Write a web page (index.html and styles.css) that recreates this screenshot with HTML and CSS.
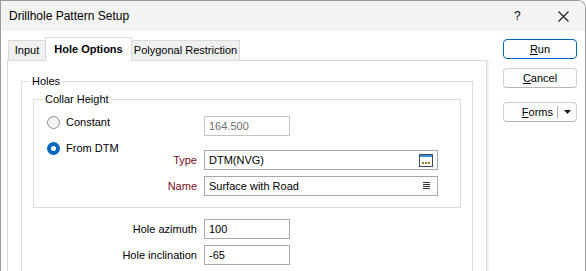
FILE: index.html
```html
<!DOCTYPE html>
<html lang="en">

<head>
    <meta charset="UTF-8">
    <title>Drillhole Pattern Setup</title>
    <link rel="stylesheet" href="styles.css">
</head>

<body>
    <div class="window">
        <div class="titlebar">
            <span class="title">Drillhole Pattern Setup</span>
            <span class="help">?</span>
            <span class="close">
                <svg width="11" height="11" viewBox="0 0 11 11">
                    <path d="M0.5 0.5 L10.5 10.5 M10.5 0.5 L0.5 10.5" stroke="#1a1a1a" stroke-width="1.1" fill="none" />
                </svg>
            </span>
        </div>

        <div class="content">
            <div class="tabs-area">
                <div class="tabs">
                    <div class="tab tab-input">Input</div>
                    <div class="tab tab-hole active">Hole Options</div>
                    <div class="tab tab-poly">Polygonal Restriction</div>
                </div>

                <div class="panel">
                    <fieldset class="group holes">
                        <legend>Holes</legend>

                        <fieldset class="group collar">
                            <legend>Collar Height</legend>
                            <div class="collar-grid">
                                <div class="cell row1">
                                    <label class="radio">
                                        <span class="dot"></span>Constant
                                    </label>
                                </div>
                                <div class="field disabled short">164.500</div>

                                <div class="cell row2">
                                    <label class="radio">
                                        <span class="dot checked"></span>From DTM
                                    </label>
                                    <span class="label red">Type</span>
                                </div>
                                <div class="field">
                                    <span>DTM(NVG)</span>
                                    <svg class="browse" width="14" height="13" viewBox="0 0 14 13">
                                        <rect x="0.5" y="0.5" width="13" height="12" fill="#fff" stroke="#3d4b5c" />
                                        <rect x="1" y="1" width="12" height="2" fill="#3a8ee6" />
                                        <rect x="3" y="8" width="2" height="2" fill="#a8782c" />
                                        <rect x="6" y="8" width="2" height="2" fill="#a8782c" />
                                        <rect x="9" y="8" width="2" height="2" fill="#a8782c" />
                                    </svg>
                                </div>

                                <div class="cell row3">
                                    <span class="label red">Name</span>
                                </div>
                                <div class="field">
                                    <span>Surface with Road</span>
                                    <svg class="list" width="7" height="8" viewBox="0 0 7 8">
                                        <path d="M0 0.5 H7 M0 2.5 H7 M0 4.5 H7 M0 6.5 H7" stroke="#333" stroke-width="1" />
                                    </svg>
                                </div>
                            </div>
                        </fieldset>

                        <div class="field-row first">
                            <span class="label">Hole azimuth</span>
                            <div class="field short">100</div>
                        </div>
                        <div class="field-row">
                            <span class="label">Hole inclination</span>
                            <div class="field short">-65</div>
                        </div>
                    </fieldset>
                </div>
            </div>

            <div class="side">
                <button class="btn primary"><u>R</u>un</button>
                <button class="btn"><u>C</u>ancel</button>
                <div class="btn split">
                    <span class="split-text"><u>F</u>orms</span>
                    <span class="split-arrow">
                        <svg width="7" height="4" viewBox="0 0 7 4">
                            <path d="M0 0 H7 L3.5 4 Z" fill="#1a1a1a" />
                        </svg>
                    </span>
                </div>
            </div>
        </div>
    </div>
</body>

</html>
```

FILE: styles.css
```css
body {
    margin: 0;
    background: #fff;
    font-family: "Liberation Sans", Arial, sans-serif;
    font-size: 11px;
    color: #000;
}

.window {
    width: 586px;
    height: 271px;
    box-sizing: border-box;
    border: 1px solid #9a9a9a;
    border-bottom: none;
    border-top-right-radius: 8px;
    overflow: hidden;
    background: #fff;
}

.titlebar {
    height: 30px;
    display: flex;
    align-items: center;
    background: #f3f3f3;
    padding-left: 8px;
}

.title {
    font-size: 12px;
    flex: 1;
}

.help {
    font-size: 12px;
    width: 44px;
}

.close {
    width: 27px;
    display: flex;
}

.content {
    display: flex;
}

.tabs-area {
    margin-left: 6px;
    padding-top: 7px;
    width: 480px;
}

.tabs {
    display: flex;
    align-items: flex-end;
    height: 22px;
    margin-left: 1px;
    position: relative;
    z-index: 1;
}

.tab {
    box-sizing: border-box;
    height: 20px;
    border: 1px solid #d9d9d9;
    border-bottom: none;
    background: #f0f0f0;
    text-align: center;
    line-height: 19px;
    margin-left: -1px;
}

.tab-input {
    width: 38px;
    margin-left: 0;
}

.tab-hole {
    width: 87px;
}

.tab-poly {
    width: 109px;
}

.tab.active {
    height: 24px;
    margin-bottom: -1px;
    background: #fff;
    font-weight: bold;
    line-height: 22px;
    z-index: 2;
}

.panel {
    box-sizing: border-box;
    height: 240px;
    border: 1px solid #d9d9d9;
    border-right-color: #dcdcdc;
    box-shadow: 1px 0 0 #ededed, 2px 0 0 #f4f4f4;
    padding: 12px 13px 0 13px;
}

.group {
    margin: 0;
    padding: 0;
    border: 1px solid #dcdcdc;
}

.group legend {
    padding: 0 2px;
    line-height: 16px;
}

.holes {
    padding: 0 11px;
    height: 220px;
}

.holes > legend {
    margin-left: -3px;
}

.collar {
    margin-top: 2px;
    padding: 9px 0 11px 13px;
}

.collar > legend {
    margin-left: -4px;
}

.collar-grid {
    display: grid;
    grid-template-columns: 150px 234px;
    grid-template-rows: 28px 20px 20px;
    column-gap: 7px;
    row-gap: 6px;
}

.collar-grid .field.short {
    height: 20px;
}

.cell {
    display: flex;
    justify-content: space-between;
    align-items: flex-start;
}

.row3 {
    justify-content: flex-end;
}

.radio {
    display: flex;
    align-items: center;
    line-height: 16px;
    gap: 6px;
}

.row1 .radio {
    margin-top: -2px;
}

.row2 .radio {
    margin-top: -10px;
}

.dot {
    box-sizing: border-box;
    width: 13px;
    height: 13px;
    border-radius: 50%;
    border: 1px solid #8a8a8a;
    background: #f3f3f3;
}

.dot.checked {
    border: 4px solid #0067c0;
    background: #fff;
}

.label {
    line-height: 20px;
    white-space: nowrap;
}

.label.red {
    color: #7a0a22;
}

.field {
    box-sizing: border-box;
    height: 20px;
    border: 1px solid #a8a8a8;
    padding: 0 4px;
    display: flex;
    align-items: center;
    justify-content: space-between;
    background: #fff;
}

.field.short {
    width: 86px;
}

.field.disabled {
    border-color: #c4c4c4;
    color: #6d6d6d;
}

.list {
    margin-right: 3px;
}

.field-row {
    display: flex;
    gap: 7px;
    margin-left: 1px;
    margin-top: 6px;
}

.field-row.first {
    margin-top: 11px;
}

.field-row .label {
    width: 163px;
    text-align: right;
}

.side {
    margin-left: 16px;
    padding-top: 8px;
    display: flex;
    flex-direction: column;
    width: 74px;
}

.btn {
    box-sizing: border-box;
    height: 20px;
    width: 74px;
    border: 1px solid #d0d0d0;
    border-bottom-color: #b8b8b8;
    border-radius: 4px;
    background: #fdfdfd;
    font-family: inherit;
    font-size: 11px;
    color: #000;
    padding: 0;
    margin-bottom: 9px;
}

.btn.primary {
    border-color: #0067c0;
}

.btn.split {
    display: flex;
    align-items: center;
    margin-top: 5px;
}

.split-text {
    flex: 1;
    text-align: right;
    padding-right: 4px;
    border-right: 1px solid #b0b0b0;
    line-height: 12px;
}

.split-arrow {
    width: 18px;
    display: flex;
    justify-content: center;
}
```
